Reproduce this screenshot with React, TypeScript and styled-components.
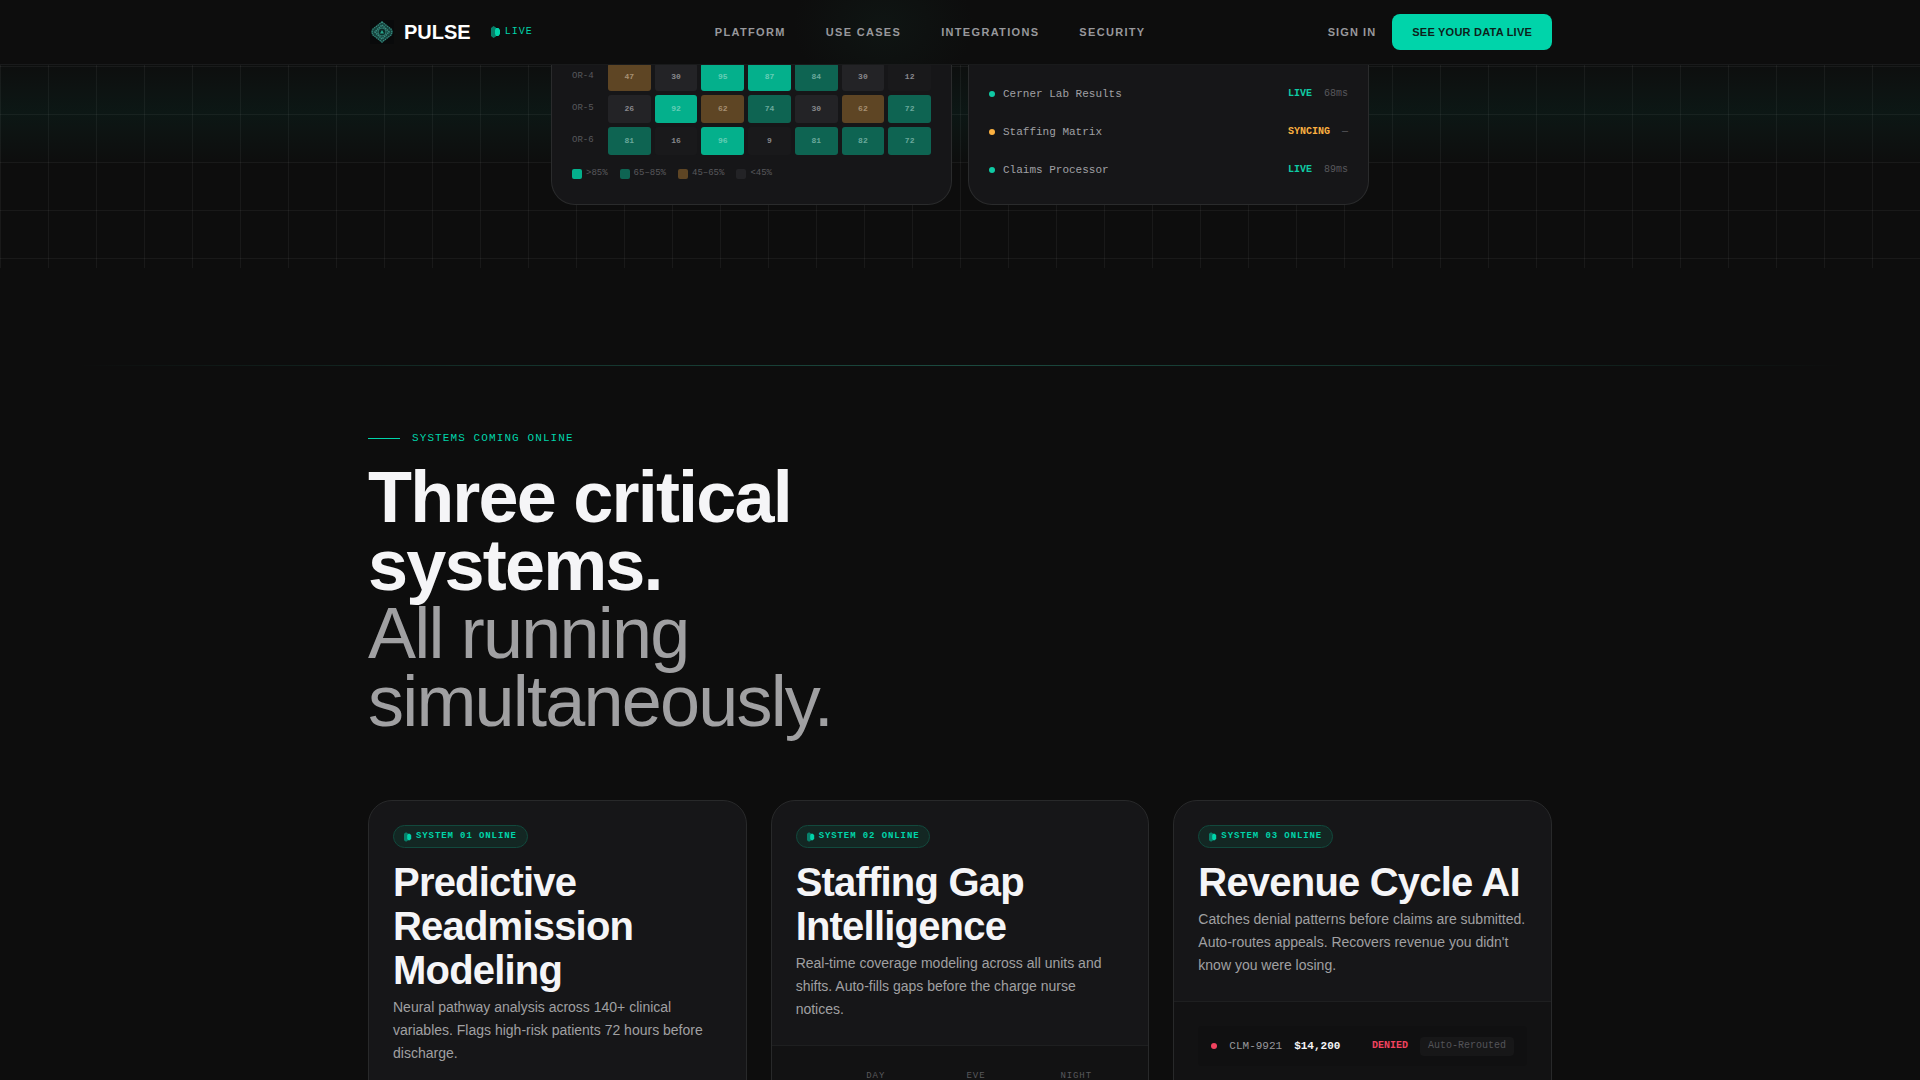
import React from "react";
import styled, { createGlobalStyle } from "styled-components";

const accent = "#00d4aa";
const mono = `"Liberation Mono", "Courier New", monospace`;

const GlobalStyle = createGlobalStyle`
  * { box-sizing: border-box; }
  html { background: #0d0d0d; overflow-x: hidden; scrollbar-width: none; }
  body {
    margin: 0;
    background: #0d0d0d;
    color: #f5f5f7;
    font-family: "Liberation Sans", Arial, sans-serif;
  }
  h2, h3, p, ul { margin: 0; padding: 0; }
  ul { list-style: none; }
`;

const Page = styled.div`
  height: 100vh;
  overflow: hidden;
`;

const Container = styled.div`
  width: 100%;
  max-width: 1280px;
  margin: 0 auto;
  padding: 0 48px;
`;

/* ---------- Navigation ---------- */

const Header = styled.header`
  position: fixed;
  inset: 0 0 auto 0;
  z-index: 10;
  background:
    radial-gradient(ellipse 90px 70px at 46% 40%, #0f1513, transparent),
    #0d0d0d;
  border-bottom: 1px solid #191a1b;
`;

const NavRow = styled(Container)`
  display: flex;
  align-items: center;
  justify-content: space-between;
  height: 64px;
`;

const Brand = styled.div`
  display: flex;
  align-items: center;
`;

const BrandLink = styled.a`
  display: flex;
  align-items: center;
  gap: 8px;
  color: #fff;
  font-size: 20px;
  font-weight: 700;
  text-decoration: none;
`;

const LiveTag = styled.span`
  display: flex;
  align-items: center;
  gap: 4px;
  margin-left: 20px;
  color: ${accent};
  font: 400 10px/18px ${mono};
  letter-spacing: 0.1em;
`;

const NavLinks = styled.nav`
  display: flex;
  gap: 40px;
`;

const NavLink = styled.a`
  color: #98989c;
  font-size: 11px;
  font-weight: 700;
  letter-spacing: 0.12em;
  text-decoration: none;
`;

const SignInLink = styled(NavLink)`
  letter-spacing: 0.1em;
`;

const Actions = styled.div`
  display: flex;
  align-items: center;
  gap: 16px;
`;

const CtaButton = styled.button`
  height: 36px;
  padding: 0 20px;
  border: 0;
  border-radius: 8px;
  background: ${accent};
  color: #0d1f1b;
  font: 700 11px "Liberation Sans", Arial, sans-serif;
  letter-spacing: 0.02em;
`;

/* ---------- Hero ---------- */

const Hero = styled.section`
  padding-bottom: 63px;
  background:
    linear-gradient(to bottom, transparent 56px, rgba(0, 212, 170, 0.05) 112px, transparent 166px),
    linear-gradient(to right, rgba(255, 255, 255, 0.05) 1px, transparent 1px) 0 0 / 48px 48px,
    linear-gradient(to bottom, rgba(255, 255, 255, 0.05) 1px, transparent 1px) 0 18px / 48px 48px,
    #0d0d0d;
`;

const Dashboard = styled.div`
  display: grid;
  grid-template-columns: 1fr 1fr;
  gap: 16px;
  max-width: 818px;
  margin: 0 auto;
`;

const Panel = styled.div`
  padding: 63px 20px 15px;
  border: 1px solid #2a2b2c;
  border-top: 0;
  border-radius: 0 0 24px 24px;
  background: #161618;
`;

const HeatRow = styled.div`
  display: grid;
  grid-template-columns: 32px repeat(7, 1fr);
  gap: 4px;
  margin-bottom: 4px;
`;

const HeatLabel = styled.span`
  color: #58585c;
  font: 400 9px/26px ${mono};
`;

type Level = "high" | "mid" | "warm" | "low" | "idle";

const levelFill: Record<Level, string> = {
  high: "#04b08c",
  mid: "#0e6452",
  warm: "#5e4524",
  low: "#232326",
  idle: "#19191b",
};

const levelText: Record<Level, string> = {
  high: "#66cdb6",
  mid: "#6aa89b",
  warm: "#a68f72",
  low: "#88888c",
  idle: "#88888c",
};

const HeatCell = styled.span<{ $level: Level }>`
  display: flex;
  align-items: center;
  justify-content: center;
  height: 28px;
  padding-bottom: 1px;
  border-radius: 3px;
  background: ${(p) => levelFill[p.$level]};
  color: ${(p) => levelText[p.$level]};
  font: 700 8px ${mono};
`;

const Legend = styled.ul`
  display: flex;
  gap: 12px;
  padding-top: 8px;
`;

const LegendItem = styled.li`
  display: flex;
  align-items: flex-end;
  gap: 4px;
  height: 12px;
  color: #58585c;
  font: 400 9px/12px ${mono};
`;

const Swatch = styled.span<{ $level: Level }>`
  width: 10px;
  height: 10px;
  border-radius: 2px;
  background: ${(p) => levelFill[p.$level]};
`;

const FeedList = styled.ul`
  padding-top: 12px;
`;

const FeedRow = styled.li`
  display: flex;
  align-items: center;
  gap: 8px;
  height: 38px;
  color: #a0a0a4;
  font: 400 11px/16px ${mono};
`;

const Dot = styled.span<{ $color: string }>`
  width: 6px;
  height: 6px;
  border-radius: 50%;
  background: ${(p) => p.$color};
`;

const FeedState = styled.span<{ $color: string }>`
  margin-left: auto;
  color: ${(p) => p.$color};
  font-size: 10px;
  font-weight: 700;
`;

const Latency = styled.span`
  margin-left: 4px;
  color: #58585c;
  font-size: 10px;
`;

/* ---------- Systems ---------- */

const Divider = styled.hr`
  height: 1px;
  margin: 97px 0 0;
  border: 0;
  background: linear-gradient(to right, transparent 4%, #14332c 28%, #1b4a3f 50%, #14332c 72%, transparent 96%);
`;

const Systems = styled.section`
  padding-top: 64px;
`;

const Eyebrow = styled.p`
  display: flex;
  align-items: center;
  gap: 12px;
  color: ${accent};
  font: 400 11px/16px ${mono};
  letter-spacing: 0.1em;

  &::before {
    content: "";
    width: 32px;
    height: 1px;
    background: ${accent};
  }
`;

const Headline = styled.h2`
  max-width: 600px;
  margin-top: 17px;
  color: #f5f5f7;
  font-size: 72px;
  font-weight: 700;
  line-height: 68px;
  letter-spacing: -0.025em;
`;

const Muted = styled.span`
  display: block;
  color: #a0a0a2;
  font-weight: 400;
`;

const CardGrid = styled.div`
  display: grid;
  grid-template-columns: repeat(3, 1fr);
  align-items: start;
  gap: 24px;
  margin-top: 65px;
`;

const Card = styled.article`
  min-height: 520px;
  overflow: hidden;
  border: 1px solid #28292a;
  border-radius: 24px;
  background: #161618;
`;

const CardIntro = styled.div`
  padding: 24px;
`;

const Badge = styled.span`
  display: inline-flex;
  align-items: center;
  gap: 4px;
  height: 23px;
  padding: 0 10px;
  border: 1px solid #12493d;
  border-radius: 12px;
  background: #132723;
  color: ${accent};
  font: 700 9px/16px ${mono};
  letter-spacing: 0.1em;
`;

const BadgeText = styled.span`
  padding-bottom: 2px;
`;

const CardTitle = styled.h3`
  margin-top: 12px;
  font-size: 40px;
  font-weight: 700;
  line-height: 44px;
  letter-spacing: -0.02em;
`;

const CardText = styled.p`
  margin-top: 4px;
  color: #a0a0a2;
  font-size: 14px;
  line-height: 23px;
`;

const CardDetail = styled.div`
  min-height: 400px;
  padding: 24px;
  border-top: 1px solid #1e1f20;
  background: #121213;
`;

const ShiftHeader = styled.div`
  display: grid;
  grid-template-columns: 28px repeat(3, 1fr);
  gap: 4px;
  color: #58585c;
  font: 400 9px/12px ${mono};
  letter-spacing: 0.1em;
  text-align: center;
`;

const ClaimRow = styled.div`
  display: flex;
  align-items: center;
  gap: 12px;
  height: 40px;
  padding: 0 13px;
  border-radius: 4px;
  background: #101011;
  color: #98989c;
  font: 400 11px/16px ${mono};
`;

const Amount = styled.strong`
  color: #f5f5f7;
`;

const Denied = styled.strong`
  margin-left: auto;
  color: #f0435f;
  font-size: 10px;
`;

const ClaimTag = styled.span`
  padding: 1px 8px 2px;
  border-radius: 4px;
  background: #171718;
  color: #545458;
  font-size: 10px;
`;

/* ---------- Drawings ---------- */

const Logo = () => (
  <svg width="28" height="28" viewBox="0 0 28 28" aria-hidden="true">
    <rect x="2" y="2" width="24" height="24" fill="#090a0b" />
    <path d="M14 3 19 7 24 11 25 14 24 17 19 21 14 25 9 21 4 17 3 14 4 11 9 7Z" fill="#16443e" />
    <g fill="none" stroke="#3a8d82">
      <path d="M14 4 19 8 23 11 24 14 23 17 19 20 14 24 9 20 5 17 4 14 5 11 9 8Z" strokeWidth="1.2" strokeDasharray="1.2 1" />
      <path d="M14 7 21 14 14 21 7 14Z" strokeWidth="1.6" strokeDasharray="1.4 0.8" />
      <circle cx="14" cy="14" r="4" strokeWidth="1" stroke="#2a7368" />
    </g>
    <circle cx="14" cy="14" r="3" fill="#0d2b27" />
    <path d="m14 12 2 3.500h-4Z" fill="#27a58c" />
  </svg>
);

const Pulse = ({ size }: { size: number }) => (
  <svg width={size} height={size + 4} viewBox="0 0 10 14" aria-hidden="true">
    <path d="M0 3 2.500 1 5 2.500v9L2.500 13 0 11Z" fill="#07806a" />
    <path d="M5 3h2.500L9 5v4L7.500 11H5L4 9V5Z" fill={accent} />
  </svg>
);

/* ---------- Data ---------- */

const heatRows: { label: string; values: number[] }[] = [
  { label: "OR-4", values: [47, 30, 95, 87, 84, 30, 12] },
  { label: "OR-5", values: [26, 92, 62, 74, 30, 62, 72] },
  { label: "OR-6", values: [81, 16, 96, 9, 81, 82, 72] },
];

const levelOf = (v: number): Level =>
  v > 85 ? "high" : v >= 65 ? "mid" : v >= 45 ? "warm" : v >= 20 ? "low" : "idle";

const legend: [Level, string][] = [
  ["high", ">85%"],
  ["mid", "65–85%"],
  ["warm", "45–65%"],
  ["low", "<45%"],
];

const feeds = [
  { name: "Cerner Lab Results", state: "LIVE", latency: "68ms", color: "#0fcaa4" },
  { name: "Staffing Matrix", state: "SYNCING", latency: "—", color: "#fbb040" },
  { name: "Claims Processor", state: "LIVE", latency: "89ms", color: "#0fcaa4" },
];

const SystemIntro = ({ id, title, text }: { id: string; title: string; text: string }) => (
  <CardIntro>
    <Badge>
      <Pulse size={8} />
      <BadgeText>SYSTEM {id} ONLINE</BadgeText>
    </Badge>
    <CardTitle>{title}</CardTitle>
    <CardText>{text}</CardText>
  </CardIntro>
);

export default function App() {
  return (
    <Page>
      <GlobalStyle />
      <Header>
        <NavRow>
          <Brand>
            <BrandLink href="#">
              <Logo />
              PULSE
            </BrandLink>
            <LiveTag>
              <Pulse size={10} />
              LIVE
            </LiveTag>
          </Brand>
          <NavLinks>
            <NavLink href="#platform">PLATFORM</NavLink>
            <NavLink href="#use-cases">USE CASES</NavLink>
            <NavLink href="#integrations">INTEGRATIONS</NavLink>
            <NavLink href="#security">SECURITY</NavLink>
          </NavLinks>
          <Actions>
            <SignInLink href="#sign-in">SIGN IN</SignInLink>
            <CtaButton type="button">SEE YOUR DATA LIVE</CtaButton>
          </Actions>
        </NavRow>
      </Header>

      <Hero>
        <Dashboard>
          <Panel>
            {heatRows.map((row) => (
              <HeatRow key={row.label}>
                <HeatLabel>{row.label}</HeatLabel>
                {row.values.map((v, i) => (
                  <HeatCell key={i} $level={levelOf(v)}>
                    {v}
                  </HeatCell>
                ))}
              </HeatRow>
            ))}
            <Legend>
              {legend.map(([level, label]) => (
                <LegendItem key={label}>
                  <Swatch $level={level} />
                  {label}
                </LegendItem>
              ))}
            </Legend>
          </Panel>
          <Panel>
            <FeedList>
              {feeds.map((f) => (
                <FeedRow key={f.name}>
                  <Dot $color={f.color} />
                  {f.name}
                  <FeedState $color={f.color}>{f.state}</FeedState>
                  <Latency>{f.latency}</Latency>
                </FeedRow>
              ))}
            </FeedList>
          </Panel>
        </Dashboard>
      </Hero>

      <Divider />

      <Systems id="platform">
        <Container>
          <Eyebrow>SYSTEMS COMING ONLINE</Eyebrow>
          <Headline>
            Three critical systems.
            <Muted>All running simultaneously.</Muted>
          </Headline>
          <CardGrid>
            <Card>
              <SystemIntro
                id="01"
                title="Predictive Readmission Modeling"
                text="Neural pathway analysis across 140+ clinical variables. Flags high-risk patients 72 hours before discharge."
              />
            </Card>
            <Card>
              <SystemIntro
                id="02"
                title="Staffing Gap Intelligence"
                text="Real-time coverage modeling across all units and shifts. Auto-fills gaps before the charge nurse notices."
              />
              <CardDetail>
                <ShiftHeader>
                  <span />
                  <span>DAY</span>
                  <span>EVE</span>
                  <span>NIGHT</span>
                </ShiftHeader>
              </CardDetail>
            </Card>
            <Card>
              <SystemIntro
                id="03"
                title="Revenue Cycle AI"
                text="Catches denial patterns before claims are submitted. Auto-routes appeals. Recovers revenue you didn't know you were losing."
              />
              <CardDetail>
                <ClaimRow>
                  <Dot $color="#f0435f" />
                  CLM-9921
                  <Amount>$14,200</Amount>
                  <Denied>DENIED</Denied>
                  <ClaimTag>Auto-Rerouted</ClaimTag>
                </ClaimRow>
              </CardDetail>
            </Card>
          </CardGrid>
        </Container>
      </Systems>
    </Page>
  );
}
